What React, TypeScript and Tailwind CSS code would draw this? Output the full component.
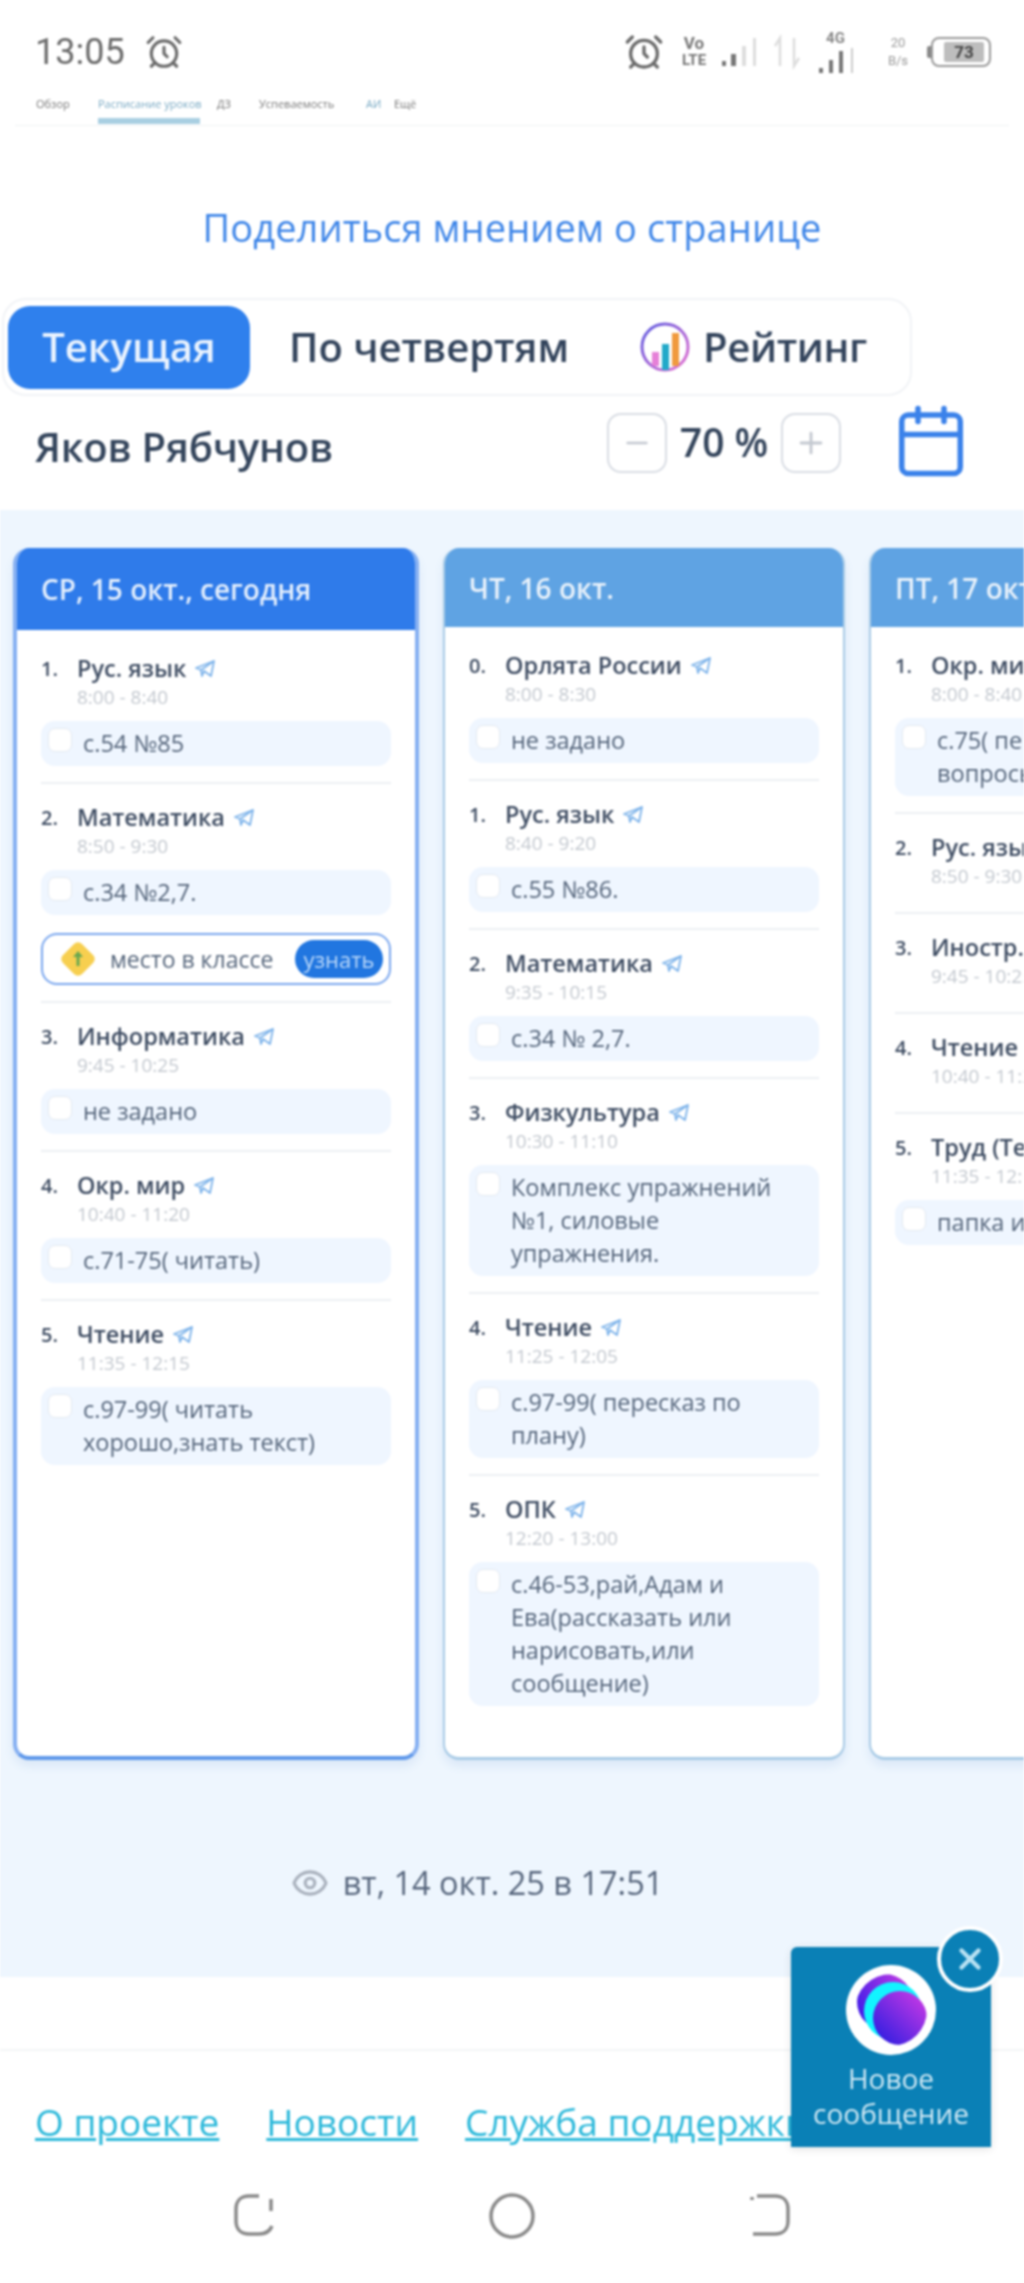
import { AlarmClock, Calendar, Eye, Minus, Plus, X } from "lucide-react";

type Lesson = {
  num: number;
  title: string;
  time: string;
  hw?: string;
  promo?: boolean;
};

type Day = {
  label: string;
  today?: boolean;
  lessons: Lesson[];
};

const days: Day[] = [
  {
    label: "СР, 15 окт., сегодня",
    today: true,
    lessons: [
      { num: 1, title: "Рус. язык", time: "8:00 - 8:40", hw: "с.54 №85" },
      { num: 2, title: "Математика", time: "8:50 - 9:30", hw: "с.34 №2,7.", promo: true },
      { num: 3, title: "Информатика", time: "9:45 - 10:25", hw: "не задано" },
      { num: 4, title: "Окр. мир", time: "10:40 - 11:20", hw: "с.71-75( читать)" },
      { num: 5, title: "Чтение", time: "11:35 - 12:15", hw: "с.97-99( читать хорошо,знать текст)" },
    ],
  },
  {
    label: "ЧТ, 16 окт.",
    lessons: [
      { num: 0, title: "Орлята России", time: "8:00 - 8:30", hw: "не задано" },
      { num: 1, title: "Рус. язык", time: "8:40 - 9:20", hw: "с.55 №86." },
      { num: 2, title: "Математика", time: "9:35 - 10:15", hw: "с.34 № 2,7." },
      { num: 3, title: "Физкультура", time: "10:30 - 11:10", hw: "Комплекс упражнений №1, силовые упражнения." },
      { num: 4, title: "Чтение", time: "11:25 - 12:05", hw: "с.97-99( пересказ по плану)" },
      { num: 5, title: "ОПК", time: "12:20 - 13:00", hw: "с.46-53,рай,Адам и Ева(рассказать или нарисовать,или сообщение)" },
    ],
  },
  {
    label: "ПТ, 17 окт.",
    lessons: [
      { num: 1, title: "Окр. мир", time: "8:00 - 8:40", hw: "с.75( пересказ, ответы вопросы)" },
      { num: 2, title: "Рус. язык", time: "8:50 - 9:30" },
      { num: 3, title: "Иностр. язык", time: "9:45 - 10:25" },
      { num: 4, title: "Чтение", time: "10:40 - 11:20" },
      { num: 5, title: "Труд (Технология)", time: "11:35 - 12:15", hw: "папка и материалы" },
    ],
  },
];

function Plane() {
  return (
    <svg width="22" height="20" viewBox="0 0 22 20" fill="none" stroke="#7db3ea" strokeWidth="1.8" strokeLinejoin="round">
      <path d="M2 9 20 2l-3 15-7-5-2 5-1-6z" />
      <path d="M7 11 20 2" />
    </svg>
  );
}

function LessonRow({ lesson, first, last }: { lesson: Lesson; first: boolean; last: boolean }) {
  return (
    <div className={`${first ? "pt-[24px]" : "pt-[19px]"} ${last ? "" : "pb-[16px] border-b-2 border-[#eceff3]"}`}>
      <div className="flex items-center h-[30px] whitespace-nowrap">
        <span className="w-[36px] text-[20px] font-semibold text-[#3f4d63]">{lesson.num}.</span>
        <span className="text-[23.5px] font-semibold text-[#3f4d63]">{lesson.title}</span>
        <span className="ml-[8px] flex"><Plane /></span>
      </div>
      <div className="pl-[36px] h-[26px] text-[19px] leading-[26px] text-[#c3c8cf] whitespace-nowrap">{lesson.time}</div>
      {lesson.hw ? (
        <div className="mt-[11px] flex rounded-[14px] bg-[#eff6ff] pl-[7px] pr-[24px] py-[6px]">
          <span className="mt-[1px] w-[24px] h-[24px] shrink-0 rounded-[7px] border border-[#e3e9f1] bg-white" />
          <span className="ml-[11px] text-[23.5px] leading-[33px] text-[#54647a]">{lesson.hw}</span>
        </div>
      ) : (
        <div className="h-[7px]" />
      )}
      {lesson.promo && (
        <div className="mt-[18px] flex items-center h-[52px] rounded-[16px] border-2 border-[#79a6ee] pl-[16px] pr-[6px]">
          <svg width="38" height="38" viewBox="0 0 38 38" className="shrink-0">
            <path d="M15 4a5.500 5.500 0 0 1 8 0l11 11a5.500 5.500 0 0 1 0 8L23 34a5.500 5.500 0 0 1-8 0L4 23a5.500 5.500 0 0 1 0-8z" fill="#f7cf4f" />
            <path d="M19 11l-5 6h3.500v9h3v-9H24z" fill="#6aa84f" />
          </svg>
          <span className="ml-[13px] text-[23px] font-medium text-[#54647a] whitespace-nowrap">место в классе</span>
          <span className="ml-auto flex items-center justify-center w-[88px] h-[38px] rounded-full bg-[#2176e0] text-[22px] text-[#bcd9fa]">узнать</span>
        </div>
      )}
    </div>
  );
}

function DayColumn({ day }: { day: Day }) {
  return (
    <section
      className={
        day.today
          ? "w-[406px] shrink-0 rounded-[16px] border-x-[4px] border-b-[4px] border-[#86b0f2] border-b-[#5f98ea] bg-white overflow-hidden shadow-[0_6px_10px_rgba(80,130,200,0.12)]"
          : "w-[402px] shrink-0 rounded-[16px] border-x-2 border-b-[3px] border-[#a9cbe6] bg-white overflow-hidden shadow-[0_6px_10px_rgba(80,130,200,0.12)]"
      }
    >
      <header
        className={
          day.today
            ? "-mx-[4px] h-[82px] bg-[#2f7bea] pl-[28px] flex items-center text-[28px] font-semibold text-[#e4effd] whitespace-nowrap"
            : "-mx-[2px] h-[79px] bg-[#5fa3e3] pl-[26px] flex items-center text-[28px] font-semibold text-[#e9f2fb] whitespace-nowrap"
        }
      >
        {day.label}
      </header>
      <div className="px-[24px]">
        {day.lessons.map((lesson, i) => (
          <LessonRow key={lesson.num} lesson={lesson} first={i === 0} last={i === day.lessons.length - 1} />
        ))}
      </div>
    </section>
  );
}

function StatusBar() {
  return (
    <div className="h-[90px] pl-[35px] pr-[33px] pt-[14px] flex items-center justify-between text-[#6b6b6b]">
      <div className="flex items-center gap-[20px]">
        <span className="text-[36px] font-['Roboto']">13:05</span>
        <AlarmClock size={38} strokeWidth={2} />
      </div>
      <div className="flex items-center">
        <AlarmClock size={40} strokeWidth={2} />
        <div className="ml-[12px] w-[36px] flex flex-col items-center text-[#777] font-['Roboto'] font-bold leading-[17px]">
          <span className="text-[17px]">Vo</span>
          <span className="text-[15px]">LTE</span>
        </div>
        <svg width="90" height="40" viewBox="0 0 90 40" className="ml-[6px]" fill="#777">
          <rect x="4" y="29" width="4" height="5" />
          <rect x="13" y="22" width="5" height="12" />
          <rect x="24" y="14" width="4" height="20" fill="#ddd" />
          <rect x="35" y="6" width="3" height="28" fill="#ddd" />
          <path d="M62 34V6l-5 8M76 6v28l5-8" fill="none" stroke="#ddd" strokeWidth="2.500" />
        </svg>
        <div className="w-[55px] h-[44px] flex flex-col items-center justify-between">
          <span className="text-[15px] leading-[17px] font-bold text-[#888] font-['Roboto']">4G</span>
          <svg width="42" height="26" viewBox="0 0 42 26" fill="#777">
            <rect x="4" y="20" width="4" height="5" />
            <rect x="14" y="12" width="4" height="13" />
            <rect x="24" y="3" width="4" height="22" />
            <rect x="36" y="0" width="2" height="25" fill="#ccc" />
          </svg>
        </div>
        <div className="ml-[18px] w-[34px] flex flex-col items-center text-[#999] text-[13px] leading-[18px] font-['Roboto']">
          <span>20</span>
          <span>B/s</span>
        </div>
        <span className="ml-[12px] w-[4px] h-[12px] rounded-l-[2px] bg-[#888]" />
        <div className="w-[60px] h-[30px] rounded-[8px] border-2 border-[#999] p-[3px] flex">
          <div className="w-[40px] ml-[8px] rounded-[2px] bg-[#bdbdbd] text-[17px] leading-[20px] font-bold text-[#444] text-center font-['Roboto']">73</div>
        </div>
      </div>
    </div>
  );
}

export default function App() {
  return (
    <div className="relative w-[1024px] h-[2283px] overflow-hidden bg-white font-['Open_Sans',sans-serif] blur-[1px]">
      <StatusBar />

      <nav className="mx-[15px] h-[36px] border-b border-[#f0f2f4] pl-[21px] flex items-start text-[11px] leading-[27px] text-[#777] whitespace-nowrap">
        <span className="w-[62px]">Обзор</span>
        <span className="w-[102px] h-[34px] border-b-[6px] border-[#a9cfe2] text-[#7aaac4]">Расписание уроков</span>
        <span className="ml-[17px] w-[42px]">ДЗ</span>
        <span className="w-[107px]">Успеваемость</span>
        <span className="w-[28px] text-[#7aaac4]">АИ</span>
        <span>Ещё</span>
      </nav>

      <div className="h-[172px] pt-[79px] text-center text-[38px] leading-[44px] font-medium text-[#3f86e8] tracking-[0.1px]">
        Поделиться мнением о странице
      </div>

      <div className="ml-[2px] w-[910px] h-[98px] rounded-[24px] border-2 border-[#f1f3f6] pl-[4px] flex items-center text-[40px] font-semibold text-[#33445c]">
        <span className="w-[242px] h-[83px] rounded-[22px] bg-[#2f80ed] text-[#eaf3fe] flex items-center justify-center">Текущая</span>
        <span className="ml-[39px]">По четвертям</span>
        <svg width="52" height="54" viewBox="0 0 52 54" className="ml-[70px] shrink-0">
          <defs>
            <linearGradient id="ring" x1="0" y1="0" x2="1" y2="1">
              <stop offset="0" stopColor="#5b5be0" />
              <stop offset="1" stopColor="#e66fd0" />
            </linearGradient>
          </defs>
          <circle cx="26" cy="27" r="23" fill="none" stroke="url(#ring)" strokeWidth="3" />
          <rect x="13" y="32" width="7" height="14" fill="#e680d8" />
          <rect x="23" y="24" width="7" height="26" fill="#22a9c9" />
          <rect x="33" y="13" width="7" height="33" fill="#f09a3e" />
        </svg>
        <span className="ml-[12px] tracking-[-0.4px]">Рейтинг</span>
      </div>

      <div className="h-[114px] pl-[35px] flex items-start">
        <span className="mt-[29px] text-[40px] leading-[44px] font-semibold text-[#34455c] tracking-[-0.2px]">Яков Рябчунов</span>
        <div className="ml-[274px] mt-[17px] w-[60px] h-[60px] rounded-[14px] border-2 border-[#d9dde4] flex items-center justify-center text-[#c3c8d0]">
          <Minus size={32} />
        </div>
        <span className="ml-[13px] mt-[22px] text-[39px] leading-[48px] font-semibold text-[#34455c] whitespace-nowrap">70 %</span>
        <div className="ml-[13px] mt-[17px] w-[60px] h-[60px] rounded-[14px] border-2 border-[#d9dde4] flex items-center justify-center text-[#c3c8d0]">
          <Plus size={34} />
        </div>
        <Calendar size={78} strokeWidth={1.7} className="ml-[51px] mt-[6px] text-[#3b82ea]" />
      </div>

      <main className="h-[1467px] bg-[#eef6fe] pt-[38px] overflow-hidden">
        <div className="pl-[13px] h-[1212px] flex gap-[24px]">
          {days.map((day) => (
            <DayColumn key={day.label} day={day} />
          ))}
        </div>
        <div className="mt-[103px] flex items-center justify-center gap-[14px] text-[32.5px] leading-[40px] text-[#56657c] pr-[70px]">
          <Eye size={38} className="text-[#a9b1bd]" />
          <span>вт, 14 окт. 25 в 17:51</span>
        </div>
      </main>

      <footer className="mt-[72px] border-t-2 border-[#f3f5f7] pl-[35px] pt-[48px] flex gap-[47px] text-[37px] leading-[46px] text-[#2bb8da] underline whitespace-nowrap">
        <span>О проекте</span>
        <span>Новости</span>
        <span>Служба поддержки</span>
      </footer>

      <div className="absolute left-0 right-0 bottom-0 h-[136px] bg-white flex items-start justify-center gap-[214px] pt-[46px] text-[#8a8a8a]">
        <svg width="42" height="44" viewBox="0 0 42 44" fill="none" stroke="currentColor" strokeWidth="3.500">
          <path d="M26 3H16C8 3 3 8 3 16v12c0 8 5 13 13 13h10c6 0 11-3 13-8" />
          <path d="M38 6v12" />
        </svg>
        <svg width="46" height="46" viewBox="0 0 46 46" fill="none" stroke="currentColor" strokeWidth="3.500">
          <circle cx="23" cy="23" r="21" />
        </svg>
        <svg width="42" height="44" viewBox="0 0 42 44" fill="none" stroke="currentColor" strokeWidth="3.500">
          <path d="M8 3h18c8 0 13 5 13 13v12c0 8-5 13-13 13H4" />
          <path d="M3 4v3" />
        </svg>
      </div>

      <div className="absolute left-[791px] top-[1947px] w-[200px] h-[200px] rounded-t-[6px] bg-[#0a80b6] flex flex-col items-center pt-[18px] shadow-[0_2px_8px_rgba(0,0,0,0.12)]">
        <div className="w-[90px] h-[90px] rounded-full bg-white flex items-center justify-center">
          <svg width="72" height="72" viewBox="0 0 72 72">
            <defs>
              <linearGradient id="back" x1="0" y1="0.500" x2="1" y2="0">
                <stop offset="0" stopColor="#4a1fe8" />
                <stop offset="1" stopColor="#d03fe4" />
              </linearGradient>
              <linearGradient id="ball" x1="1" y1="0" x2="0" y2="1">
                <stop offset="0" stopColor="#d63be6" />
                <stop offset="1" stopColor="#1f1be0" />
              </linearGradient>
              <clipPath id="disc"><circle cx="36" cy="36" r="36" /></clipPath>
            </defs>
            <g clipPath="url(#disc)">
              <circle cx="30" cy="28" r="28" fill="url(#back)" />
              <circle cx="38" cy="37" r="29" fill="#12f4ff" />
              <circle cx="45" cy="44" r="27" fill="url(#ball)" />
            </g>
          </svg>
        </div>
        <div className="mt-[6px] text-center text-[28px] leading-[35px] text-[#cfe8f4]">
          Новое<br />сообщение
        </div>
        <div className="absolute -right-[12px] -top-[21px] w-[66px] h-[66px] rounded-full border-[4px] border-white bg-[#0a80b6] flex items-center justify-center text-[#b9e2f3]">
          <X size={34} strokeWidth={3} />
        </div>
      </div>
    </div>
  );
}
